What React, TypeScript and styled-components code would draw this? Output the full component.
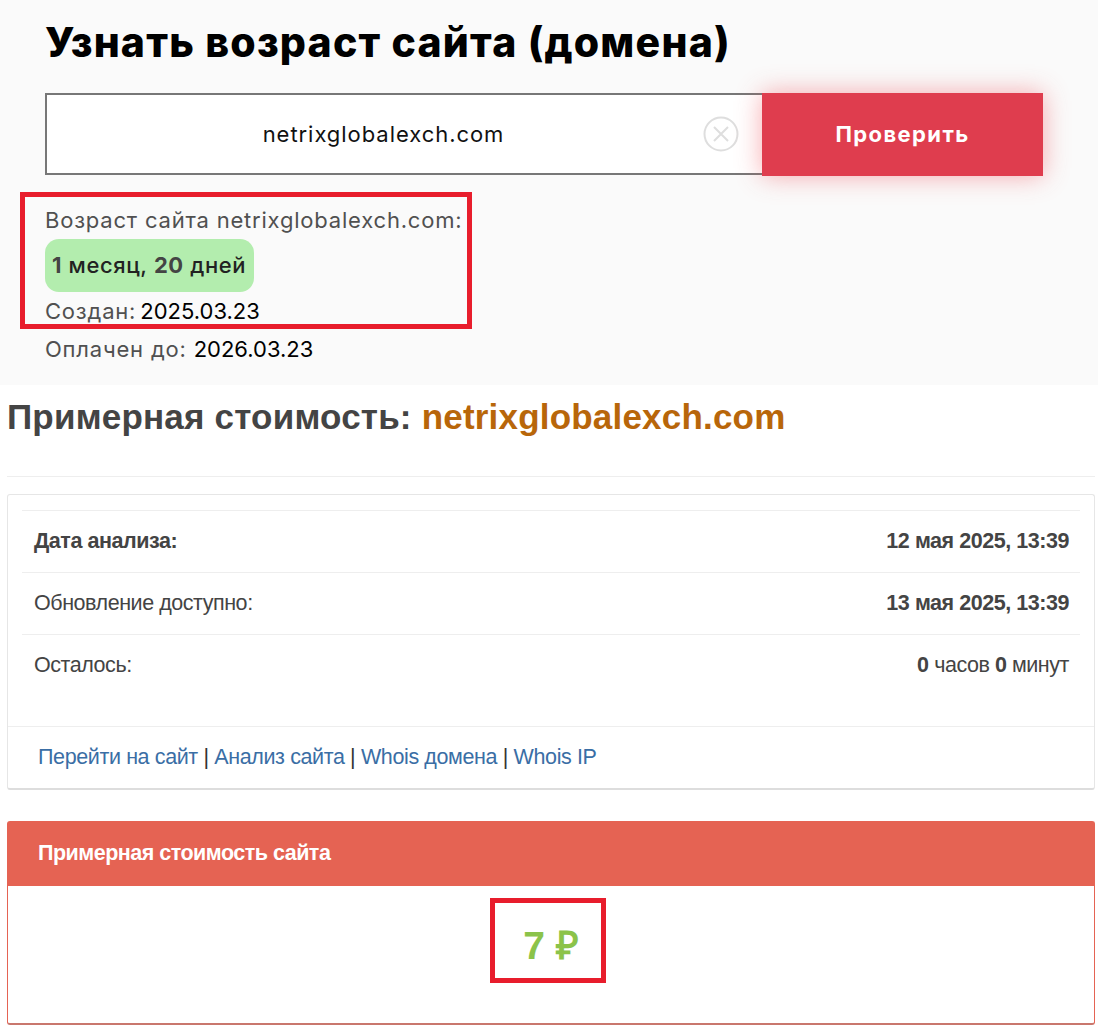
import React from 'react';
import styled, { createGlobalStyle } from 'styled-components';

const DOMAIN = 'netrixglobalexch.com';

const GlobalStyle = createGlobalStyle`
    html, body {
        margin: 0;
        padding: 0;
        background: #fff;
    }
    * {
        box-sizing: border-box;
    }
`;

const rows = [
    { label: 'Дата анализа:', strong: true, value: <b>12 мая 2025, 13:39</b> },
    { label: 'Обновление доступно:', strong: false, value: <b>13 мая 2025, 13:39</b> },
    {
        label: 'Осталось:',
        strong: false,
        value: (
            <>
                <b>0</b> часов <b>0</b> минут
            </>
        ),
    },
];

const ClearIcon = () => (
    <svg width="36" height="36" viewBox="0 0 36 36" fill="none" stroke="#dedede" strokeWidth="2">
        <circle cx="18" cy="18" r="16.5" />
        <path d="M11 11 L25 25 M25 11 L11 25" />
    </svg>
);

const App: React.FunctionComponent = () => {
    return (
        <Style.Page>
            <GlobalStyle />
            <Style.AgeSection>
                <Style.Title>Узнать возраст сайта (домена)</Style.Title>
                <Style.SearchRow>
                    <Style.InputWrap>
                        <Style.DomainInput readOnly value={DOMAIN} />
                        <Style.ClearButton>
                            <ClearIcon />
                        </Style.ClearButton>
                    </Style.InputWrap>
                    <Style.CheckButton>Проверить</Style.CheckButton>
                </Style.SearchRow>
                <Style.Info>
                    <Style.InfoMarker />
                    <Style.InfoLine>Возраст сайта {DOMAIN}:</Style.InfoLine>
                    <Style.AgeBadge>
                        <b>1</b> месяц, <b>20</b> дней
                    </Style.AgeBadge>
                    <Style.CreatedLine>
                        Создан: <span>2025.03.23</span>
                    </Style.CreatedLine>
                    <Style.PaidLine>
                        Оплачен до: <span>2026.03.23</span>
                    </Style.PaidLine>
                </Style.Info>
            </Style.AgeSection>

            <Style.CostSection>
                <Style.CostTitle>
                    Примерная стоимость: <span>{DOMAIN}</span>
                </Style.CostTitle>
                <Style.Divider />
                <Style.Card>
                    <Style.Rows>
                        {rows.map((row) => (
                            <Style.Row key={row.label}>
                                <Style.RowLabel $strong={row.strong}>{row.label}</Style.RowLabel>
                                <Style.RowValue>{row.value}</Style.RowValue>
                            </Style.Row>
                        ))}
                    </Style.Rows>
                    <Style.Links>
                        <a>Перейти на сайт</a> | <a>Анализ сайта</a> | <a>Whois домена</a> | <a>Whois IP</a>
                    </Style.Links>
                </Style.Card>
                <Style.Panel>
                    <Style.PanelHead>Примерная стоимость сайта</Style.PanelHead>
                    <Style.PanelBody>
                        <Style.Price>
                            7 ₽
                            <Style.PriceMarker />
                        </Style.Price>
                    </Style.PanelBody>
                </Style.Panel>
            </Style.CostSection>
        </Style.Page>
    );
};

const Style = {
    Page: styled.div`
        width: 1098px;
        height: 1035px;
        overflow: hidden;
        background: #fff;
    `,
    // Top screenshot: age check
    AgeSection: styled.section`
        height: 385px;
        padding: 16px 55px 0 45px;
        background: #fafafa;
        font-family: 'Inter', 'Noto Sans', sans-serif;
    `,
    Title: styled.h1`
        margin: 0;
        height: 54px;
        font-size: 41px;
        line-height: 52px;
        font-weight: 800;
        letter-spacing: 1.2px;
        white-space: nowrap;
        color: #000;
    `,
    SearchRow: styled.div`
        display: flex;
        margin-top: 23px;
        height: 83px;
    `,
    InputWrap: styled.div`
        position: relative;
        flex: 1;
        height: 82px;
        background: #fff;
        border: 2px solid #777;
        border-right: none;
    `,
    DomainInput: styled.input`
        display: block;
        width: 100%;
        height: 100%;
        padding: 0 42px 0 0;
        border: none;
        outline: none;
        background: transparent;
        text-align: center;
        font-family: inherit;
        font-size: 22px;
        letter-spacing: 0.95px;
        color: #111;
    `,
    ClearButton: styled.span`
        position: absolute;
        right: 23px;
        top: 21px;
        width: 36px;
        height: 36px;
    `,
    CheckButton: styled.button`
        position: relative;
        width: 281px;
        height: 83px;
        padding: 0 0 2px;
        border: none;
        background: #df3d4e;
        box-shadow: 0 0 24px rgba(240, 70, 80, 0.45);
        color: #fff;
        font-family: inherit;
        font-size: 22px;
        font-weight: 700;
        letter-spacing: 1.4px;
    `,
    Info: styled.div`
        position: relative;
        margin-top: 29px;
        font-size: 22px;
        letter-spacing: 0.8px;
        color: #505050;
    `,
    InfoMarker: styled.div`
        position: absolute;
        left: -25px;
        top: -13px;
        width: 452px;
        height: 137px;
        border: 5px solid #e81d2c;
    `,
    InfoLine: styled.div`
        height: 30px;
        line-height: 30px;
        white-space: nowrap;
    `,
    CreatedLine: styled.div`
        height: 30px;
        line-height: 30px;
        span {
            margin-left: -3px;
            color: #000;
            letter-spacing: 0;
        }
    `,
    PaidLine: styled.div`
        height: 30px;
        margin-top: 8px;
        line-height: 30px;
        span {
            color: #000;
            letter-spacing: 0;
        }
    `,
    AgeBadge: styled.div`
        display: table;
        height: 53px;
        margin: 4px 0;
        padding: 0 8px 0 7px;
        border-radius: 14px;
        background: #b3edae;
        color: #222;
        font-size: 22px;
        line-height: 53px;
        font-weight: 500;
        letter-spacing: 0.6px;
        b {
            color: #444;
        }
    `,
    // Bottom screenshot: cost estimate
    CostSection: styled.section`
        padding: 0 3px 0 7px;
        font-family: 'Liberation Sans', Arial, sans-serif;
        color: #444;
    `,
    CostTitle: styled.h2`
        margin: 0;
        padding-top: 11px;
        height: 91px;
        font-size: 35px;
        line-height: 41px;
        font-weight: 700;
        letter-spacing: 0.2px;
        white-space: nowrap;
        span {
            color: #b8660a;
        }
    `,
    Divider: styled.div`
        height: 1px;
        background: #eee;
    `,
    Card: styled.div`
        margin-top: 17px;
        height: 296px;
        padding-top: 15px;
        border: 1px solid #e6e6e6;
        border-bottom: 2px solid #ddd;
        border-radius: 3px;
    `,
    Rows: styled.div`
        height: 216px;
        padding: 0 14px;
    `,
    Row: styled.div`
        display: flex;
        justify-content: space-between;
        align-items: center;
        height: 62px;
        padding: 0 11px 0 12px;
        border-top: 1px solid #eee;
        font-size: 21.5px;
        letter-spacing: -0.45px;
    `,
    RowLabel: styled.span<{ $strong: boolean }>`
        font-weight: ${(props) => (props.$strong ? 700 : 400)};
    `,
    RowValue: styled.span``,
    Links: styled.div`
        height: 62px;
        padding: 14px 0 0 30px;
        border-top: 1px solid #eee;
        font-size: 21.5px;
        letter-spacing: -0.38px;
        line-height: 32px;
        color: #333;
        a {
            color: #3a6ea5;
        }
    `,
    Panel: styled.div`
        margin-top: 31px;
        height: 204px;
        border: 1px solid #e56353;
        border-bottom: 2px solid #c9776d;
        border-radius: 3px;
    `,
    PanelHead: styled.div`
        height: 64px;
        padding-left: 30px;
        background: #e56353;
        color: #fff;
        font-size: 21.5px;
        font-weight: 700;
        letter-spacing: -0.5px;
        line-height: 62px;
    `,
    PanelBody: styled.div`
        display: flex;
        justify-content: center;
        padding-top: 35px;
    `,
    Price: styled.div`
        position: relative;
        font-size: 39px;
        line-height: 50px;
        font-weight: 700;
        color: #8bc34a;
    `,
    PriceMarker: styled.div`
        position: absolute;
        left: -33px;
        top: -23px;
        width: 116px;
        height: 85px;
        border: 5px solid #e81d2c;
    `,
};

export default App;
